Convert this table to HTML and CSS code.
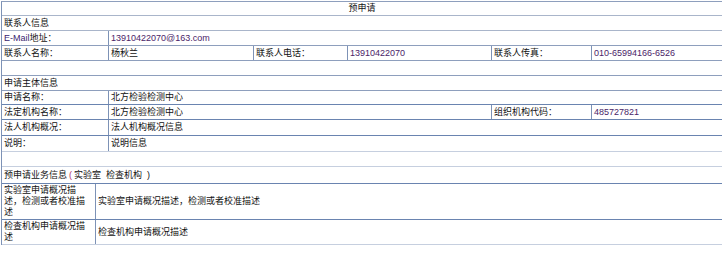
FILE: index.html
```html
<!DOCTYPE html>
<html lang="zh-CN">
<head>
<meta charset="utf-8">
<title>预申请</title>
<link rel="stylesheet" href="styles.css">
</head>
<body>
<div class="sheet">
  <div class="row title h14 line-light">预申请</div>
  <div class="row sec h15 line-light">联系人信息</div>
  <div class="row g2 h15 line-mid">
    <div class="c lab"><span class="latin">E-Mail</span>地址：</div>
    <div class="c val latin">13910422070@163.com</div>
  </div>
  <div class="row g6 h15 line-mid">
    <div class="c lab">联系人名称：</div>
    <div class="c">杨秋兰</div>
    <div class="c lab">联系人电话：</div>
    <div class="c val latin">13910422070</div>
    <div class="c lab">联系人传真：</div>
    <div class="c val latin">010-65994166-6526</div>
  </div>
  <div class="row empty h15 line-mid"></div>
  <div class="row sec h15 line-mid">申请主体信息</div>
  <div class="row g2 h14 line-strong">
    <div class="c lab">申请名称：</div>
    <div class="c">北方检验检测中心</div>
  </div>
  <div class="row g4 h15 line-strong">
    <div class="c lab">法定机构名称：</div>
    <div class="c">北方检验检测中心</div>
    <div class="c lab">组织机构代码：</div>
    <div class="c val latin">485727821</div>
  </div>
  <div class="row g2 h16 line-strong">
    <div class="c lab">法人机构概况：</div>
    <div class="c">法人机构概况信息</div>
  </div>
  <div class="row g2 h16 line-pale">
    <div class="c lab">说明：</div>
    <div class="c">说明信息</div>
  </div>
  <div class="row empty h15 line-pale"></div>
  <div class="row sec h17 line-strong">预申请业务信息<span class="paren">(</span> 实验室&nbsp; 检查机构 &nbsp;)</div>
  <div class="row gb h36 line-strong">
    <div class="c lab wrap">实验室申请概况描述，检测或者校准描述</div>
    <div class="c">实验室申请概况描述，检测或者校准描述</div>
  </div>
  <div class="row gb h25 line-pale">
    <div class="c lab wrap">检查机构申请概况描述</div>
    <div class="c">检查机构申请概况描述</div>
  </div>
</div>
</body>
</html>
```

FILE: styles.css
```css
* { box-sizing: border-box; }

html, body {
  margin: 0;
  padding: 0;
  background: #ffffff;
}

body {
  font-family: "Liberation Sans", "Noto Sans CJK SC", sans-serif;
  font-size: 9px;
  color: #111111;
}

.sheet {
  width: 721px;
  margin: 1px 0 0 1px;
  border-top: 1px solid #8e9fbd;
  border-left: 1px solid #7d92b6;
}

.row {
  display: flex;
  align-items: center;
  border-bottom: 1px solid #8e9fbd;
  line-height: 11px;
  white-space: nowrap;
}

.row.g2, .row.g4, .row.g6, .row.gb {
  display: grid;
  align-items: stretch;
}

.g2 { grid-template-columns: 106px 614px; }
.g4 { grid-template-columns: 106px 383px 100px 131px; }
.g6 { grid-template-columns: 106px 145px 94px 144px 100px 131px; }
.gb { grid-template-columns: 93px 627px; }

.c {
  display: flex;
  align-items: center;
  padding: 0 2px;
  border-left: 1px solid #7d92b6;
  overflow: hidden;
}

.c:first-child { border-left: none; }

.wrap {
  white-space: normal;
  padding: 0 5px 0 2px;
  line-height: 11px;
}

.title {
  justify-content: center;
}

.sec, .empty {
  padding: 0 2px;
}

.latin {
  font-family: "Liberation Sans", sans-serif;
}

.val { color: #4a2468; }
.lab .latin { color: #3a2470; }
.paren { color: #b0306a; margin: 0 2px; }

.h14 { height: 14px; }
.h15 { height: 15px; }
.h16 { height: 16px; }
.h17 { height: 17px; }
.h25 { height: 25px; }
.h36 { height: 36px; }

.line-light { border-bottom-color: #a9b5ca; }
.line-mid { border-bottom-color: #8e9fbd; }
.line-strong { border-bottom-color: #6a84b0; }
.line-pale { border-bottom-color: #c6cfdf; }
```
